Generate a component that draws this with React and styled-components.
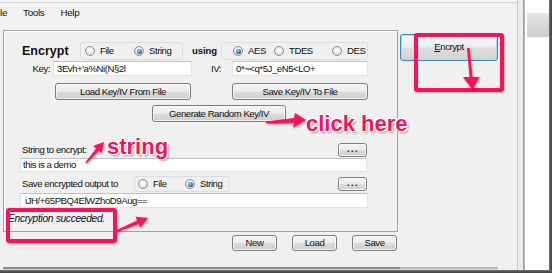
import React from 'react';
import styled, { createGlobalStyle, css } from 'styled-components';

const PINK = '#f2145c';
const UI_FONT = '"Liberation Sans", Arial, sans-serif';

const GlobalStyle = createGlobalStyle`
  html, body { margin: 0; padding: 0; background: #fff; }
  body { font-family: ${UI_FONT}; }
  #root { width: 552px; height: 273px; overflow: hidden; }
`;

const Shot = styled.div`
  position: relative;
  width: 552px;
  height: 273px;
  display: flex;
  flex-direction: column;
  overflow: hidden;
  background: #f0f0f0;
`;

const Screen = styled.div`
  display: flex;
  height: 270px;
`;

const Window = styled.div`
  width: 517px;
  height: 270px;
  border-right: 1px solid #c6c6c6;
  display: flex;
  flex-direction: column;
  background: #f0f0f0;
`;

const TopEdge = styled.div`
  height: 2px;
  background: #f6f6f6;
  border-bottom: 1px solid #d3d3d3;
`;

const MenuBar = styled.div`
  height: 27px;
  box-sizing: border-box;
  padding-top: 4px;
  display: flex;
  gap: 16px;
  background: #f2f2f2;
`;

const MenuItem = styled.span`
  font-size: 9.8px;
  line-height: 11px;
  letter-spacing: -0.3px;
  color: #111;
`;

const Body = styled.div`
  display: flex;
  height: 202px;
`;

const Panel = styled.div`
  margin-left: 3px;
  width: 395px;
  height: 202px;
  box-sizing: border-box;
  border: 1px solid #a3a3a3;
  box-shadow: inset 1px 1px 0 #ffffff;
  display: flex;
  flex-direction: column;
  font-size: 9.6px;
  letter-spacing: -0.45px;
  color: #111;
`;

const Row = styled.div`
  display: flex;
  align-items: center;
  flex: none;
  margin-top: ${(p) => p.$top}px;
  height: ${(p) => p.$h}px;
  padding-left: ${(p) => p.$pl || 0}px;
  padding-right: ${(p) => p.$pr || 0}px;
  line-height: ${(p) => p.$h}px;
`;

const Title = styled.span`
  width: 58px;
  font-size: 12.5px;
  font-weight: bold;
  letter-spacing: 0;
`;

const Using = styled.span`
  width: 29px;
  margin-left: 9px;
  font-size: 9.5px;
  font-weight: bold;
  letter-spacing: -0.1px;
`;

const Label = styled.span`
  width: ${(p) => p.$w}px;
  margin-right: ${(p) => p.$mr || 0}px;
  text-align: ${(p) => (p.$right ? 'right' : 'left')};
  white-space: nowrap;
  flex: none;
`;

const Field = styled.div`
  box-sizing: border-box;
  width: ${(p) => p.$w}px;
  height: ${(p) => p.$h}px;
  line-height: ${(p) => p.$h - 2}px;
  padding-left: ${(p) => p.$pl || 2}px;
  background: #ffffff;
  border: 1px solid #e1e3e8;
  border-top-color: #bfc2c8;
  white-space: nowrap;
  overflow: hidden;
  flex: none;
`;

const RadioBox = styled.div`
  box-sizing: border-box;
  width: ${(p) => p.$w}px;
  height: ${(p) => p.$h}px;
  padding-left: ${(p) => p.$pl}px;
  border: 1px solid #d5dfe5;
  border-radius: 3px;
  display: flex;
  align-items: center;
  flex: none;
`;

const RadioOption = styled.span`
  display: flex;
  align-items: center;
  gap: 5px;
  width: ${(p) => (p.$w ? `${p.$w}px` : 'auto')};
  flex: none;
`;

const Dot = styled.span`
  position: relative;
  width: 10px;
  height: 10px;
  box-sizing: border-box;
  border-radius: 50%;
  border: 1px solid #8c8e90;
  background: radial-gradient(circle at 50% 35%, #ffffff 0%, #e8e8e8 55%, #cdcdcd 100%);
  flex: none;
  ${(p) =>
    p.$on &&
    css`
      &::after {
        content: '';
        position: absolute;
        left: 1.5px;
        top: 1.5px;
        width: 5px;
        height: 5px;
        border-radius: 50%;
        background: radial-gradient(circle at 40% 35%, #9ad8f6 0%, #2e74ad 55%, #163e68 100%);
      }
    `}
`;

const Btn = styled.div`
  box-sizing: border-box;
  width: ${(p) => p.$w}px;
  height: ${(p) => p.$h || 17}px;
  margin-left: ${(p) => p.$ml || 0}px;
  border: 1px solid #7d7d7d;
  border-radius: 3px;
  background: linear-gradient(#f4f4f4 0%, #ececec 48%, #dcdcdc 52%, #cfcfcf 100%);
  box-shadow: inset 0 0 0 1px rgba(255, 255, 255, 0.75);
  display: flex;
  align-items: center;
  justify-content: center;
  font-size: 9.6px;
  letter-spacing: -0.45px;
  line-height: 10px;
  color: #111;
  flex: none;
`;

const DotsBtn = styled(Btn)`
  font-weight: bold;
  font-size: 9px;
  letter-spacing: 1.5px;
  padding-left: 1px;
  padding-bottom: 3px;
  margin-left: auto;
`;

const Status = styled.div`
  margin-top: 5px;
  padding-left: 4px;
  font-size: 10.3px;
  line-height: 12px;
  font-style: italic;
  letter-spacing: -0.35px;
`;

const Side = styled.div`
  padding: 4px 0 0 2px;
`;

const EncryptBtn = styled(Btn)`
  width: 98px;
  height: 27px;
  border-color: #3c86bb;
  box-shadow: inset 0 0 0 1px #a9dcf5;
  background: linear-gradient(#f6f6f6 0%, #ededed 48%, #dedede 52%, #d2d2d2 100%);
  padding-bottom: 1px;

  u {
    text-decoration: underline;
    text-underline-offset: 1px;
  }
`;

const Footer = styled.div`
  display: flex;
  justify-content: flex-end;
  gap: 15px;
  width: 397px;
  margin-top: 3px;
`;

const BottomEdge = styled.div`
  margin-top: auto;
  margin-bottom: 1px;
  margin-left: 3px;
  width: 495px;
  height: 2px;
  background: linear-gradient(to right, #8c8c8c 0, #8c8c8c 397px, #b9b9b9 397px);
  box-shadow: 0 1px 0 #dcdcdc;
`;

const Frame = styled.div`
  width: 5px;
  background: #ececec;
`;

const FrameEdge = styled.div`
  width: 2px;
  background: linear-gradient(to right, #8f8f8f, #c6c6c6);
`;

const Behind = styled.div`
  flex: 1;
  background: #ffffff;
  padding-top: 13px;
`;

const BehindBar = styled.div`
  height: 24px;
  margin-left: 2px;
  background: linear-gradient(#e6e6e6, #cdcdcd);
`;

const RightShadow = styled.div`
  width: 3px;
  background: linear-gradient(to right, #707070, #3e3e3e);
`;

const BottomShadow = styled.div`
  height: 3px;
  background: linear-gradient(#6e6e6e, #3e3e3e);
`;

/* annotation layer drawn over the screenshot */
const MarkBox = styled.div`
  position: absolute;
  left: ${(p) => p.$x}px;
  top: ${(p) => p.$y}px;
  width: ${(p) => p.$w}px;
  height: ${(p) => p.$h}px;
  box-sizing: border-box;
  border: 4px solid ${PINK};
  border-radius: 3px;
  box-shadow: 1px 1px 2px rgba(0, 0, 0, 0.3);
  pointer-events: none;
`;

const MarkText = styled.div`
  position: absolute;
  left: ${(p) => p.$x}px;
  top: ${(p) => p.$y}px;
  font-family: ${UI_FONT};
  font-weight: bold;
  font-size: 22px;
  line-height: 22px;
  color: ${PINK};
  white-space: nowrap;
  text-shadow: -1px 0 0 #fff, 1px 0 0 #fff, 0 -1px 0 #fff, 0 1px 0 #fff,
    1px 1px 0 #fff, -1px -1px 0 #fff, 2px 2px 2px rgba(0, 0, 0, 0.35);
  pointer-events: none;
`;

const ArrowLayer = styled.svg`
  position: absolute;
  left: 0;
  top: 0;
  pointer-events: none;
`;

const Radio = ({ label, on, w }) => (
  <RadioOption $w={w}>
    <Dot $on={on} />
    {label}
  </RadioOption>
);

export default function App() {
  return (
    <>
      <GlobalStyle />
      <Shot>
        <Screen>
          <Window>
            <TopEdge />
            <MenuBar>
              <MenuItem>le</MenuItem>
              <MenuItem>Tools</MenuItem>
              <MenuItem>Help</MenuItem>
            </MenuBar>
            <Body>
              <Panel>
                <Row $top={11} $h={18} $pl={18}>
                  <Title>Encrypt</Title>
                  <RadioBox $w={103} $h={18} $pl={4}>
                    <Radio w={49} label="File" />
                    <Radio label="String" on />
                  </RadioBox>
                  <Using>using</Using>
                  <RadioBox $w={147} $h={18} $pl={11}>
                    <Radio w={41} label="AES" on />
                    <Radio w={58} label="TDES" />
                    <Radio label="DES" />
                  </RadioBox>
                </Row>

                <Row $top={1} $h={15} $pl={26}>
                  <Label $w={20} $mr={3} $right>Key:</Label>
                  <Field $w={139} $h={15} $pl={3}>3Evh+'a%Ni(N§2l</Field>
                  <Label $w={29} $mr={11} $right>IV:</Label>
                  <Field $w={136} $h={15} $pl={3}>0*~&lt;q*5J_eN5&lt;LO+</Field>
                </Row>

                <Row $top={7} $h={17} $pl={51}>
                  <Btn $w={136}>Load Key/IV From File</Btn>
                  <Btn $w={136} $ml={41}>Save Key/IV To File</Btn>
                </Row>

                <Row $top={5} $h={17} $pl={148}>
                  <Btn $w={134}>Generate Random Key/IV</Btn>
                </Row>

                <Row $top={21} $h={14} $pl={18} $pr={30}>
                  <Label $w={120}>String to encrypt:</Label>
                  <DotsBtn $w={29} $h={14}>...</DotsBtn>
                </Row>

                <Row $top={1} $h={14} $pl={16}>
                  <Field $w={347} $h={14}>this is a demo</Field>
                </Row>

                <Row $top={4} $h={16} $pl={18} $pr={30}>
                  <Label $w={112}>Save encrypted output to</Label>
                  <RadioBox $w={96} $h={16} $pl={3}>
                    <Radio w={47} label="File" />
                    <Radio label="String" on />
                  </RadioBox>
                  <DotsBtn $w={29} $h={14}>...</DotsBtn>
                </Row>

                <Row $top={1} $h={15} $pl={16}>
                  <Field $w={348} $h={15} $pl={4}>iJH/+65PBQ4ElWZhoD9Aug==</Field>
                </Row>

                <Status>Encryption succeeded.</Status>
              </Panel>

              <Side>
                <EncryptBtn>
                  <span>
                    <u>E</u>ncrypt
                  </span>
                </EncryptBtn>
              </Side>
            </Body>

            <Footer>
              <Btn $w={45} $h={16}>New</Btn>
              <Btn $w={45} $h={16}>Load</Btn>
              <Btn $w={45} $h={16}>Save</Btn>
            </Footer>

            <BottomEdge />
          </Window>
          <Frame />
          <FrameEdge />
          <Behind>
            <BehindBar />
          </Behind>
          <RightShadow />
        </Screen>
        <BottomShadow />

        <MarkBox $x={414} $y={33} $w={90} $h={59} />
        <MarkBox $x={6} $y={208} $w={111} $h={35} />
        <MarkText $x={107} $y={136}>string</MarkText>
        <MarkText $x={306} $y={113}>click here</MarkText>

        <ArrowLayer width="552" height="273" viewBox="0 0 552 273">
          <defs>
            <filter id="arrowShadow" x="-20%" y="-20%" width="140%" height="140%">
              <feDropShadow dx="1" dy="1" stdDeviation="0.8" floodColor="#000" floodOpacity="0.35" />
            </filter>
          </defs>
          <g fill={PINK} filter="url(#arrowShadow)">
            <path d="M467,48 L469.5,48 L472.5,77 L479.5,77 L472.5,90 L463,77 L469.5,77 Z" />
            <path d="M116.6,230.1 L137.1,220.5 L135.6,216.8 L148,218 L140.2,227.8 L138.7,224.1 L117.4,231.9 Z" />
            <path d="M85.4,162.5 L96.1,148.4 L93.3,146 L104,142 L101.7,153.2 L98.9,150.8 L86.6,163.5 Z" />
            <path d="M266,121.5 Q280,119.5 294,118 L295,113 L306,120 L293,128 L294,123 Q280,124 266,123.5 Z" />
          </g>
        </ArrowLayer>
      </Shot>
    </>
  );
}
